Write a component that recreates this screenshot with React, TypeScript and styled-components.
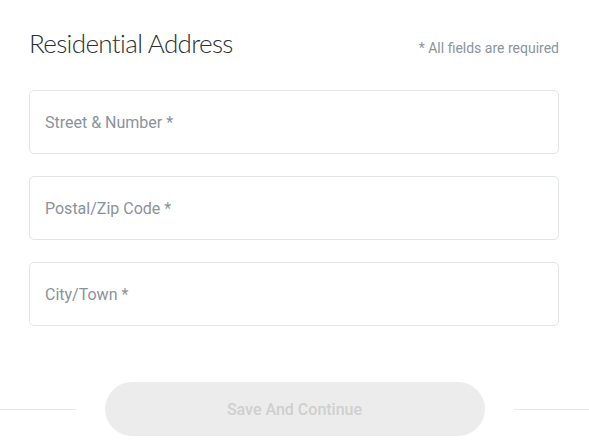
import React from 'react'
import styled, { createGlobalStyle } from 'styled-components'

const GlobalStyle = createGlobalStyle`
  body {
    margin: 0;
    background: #fff;
    font-family: Roboto, "Liberation Sans", sans-serif;
  }
`

const fields = ['Street & Number *', 'Postal/Zip Code *', 'City/Town *']

const App: React.FC = () => (
  <Page>
    <GlobalStyle />
    <Form>
      <Header>
        <Title>Residential Address</Title>
        <Note>* All fields are required</Note>
      </Header>
      <Fields>
        {fields.map((f) => (
          <Input key={f} placeholder={f} />
        ))}
      </Fields>
    </Form>
    <Footer>
      <Line />
      <SaveButton disabled>Save And Continue</SaveButton>
      <Line />
    </Footer>
  </Page>
)

export default App

const Page = styled.div`
  width: 589px;
  height: 443px;
  overflow: hidden;
`

const Form = styled.div`
  padding: 27px 30px 0 29px;
`

const Header = styled.div`
  display: flex;
  align-items: baseline;
  justify-content: space-between;
  margin-bottom: 31px;
`

const Title = styled.h2`
  margin: 0;
  font-family: Lato, "Open Sans", sans-serif;
  font-weight: 300;
  font-size: 26px;
  letter-spacing: -0.65px;
  color: #2b2f33;
`

const Note = styled.span`
  font-size: 14px;
  color: #8a959d;
`

const Fields = styled.div`
  display: flex;
  flex-direction: column;
  gap: 22px;
`

const Input = styled.input`
  box-sizing: border-box;
  width: 530px;
  height: 64px;
  padding: 0 15px;
  border: 1px solid #e1e5e7;
  border-radius: 5px;
  font: inherit;
  font-size: 16px;
  color: #333;
  outline: none;

  &::placeholder {
    color: #89939b;
  }
`

const Footer = styled.div`
  display: flex;
  align-items: center;
  gap: 29px;
  margin-top: 56px;
`

const Line = styled.div`
  flex: 1;
  height: 1px;
  background: #e8e8e8;
`

const SaveButton = styled.button`
  width: 380px;
  height: 54px;
  border: 0 none;
  border-radius: 27px;
  background: #ececec;
  color: #cfcfcf;
  font: inherit;
  font-size: 16px;
  font-weight: 500;
`
